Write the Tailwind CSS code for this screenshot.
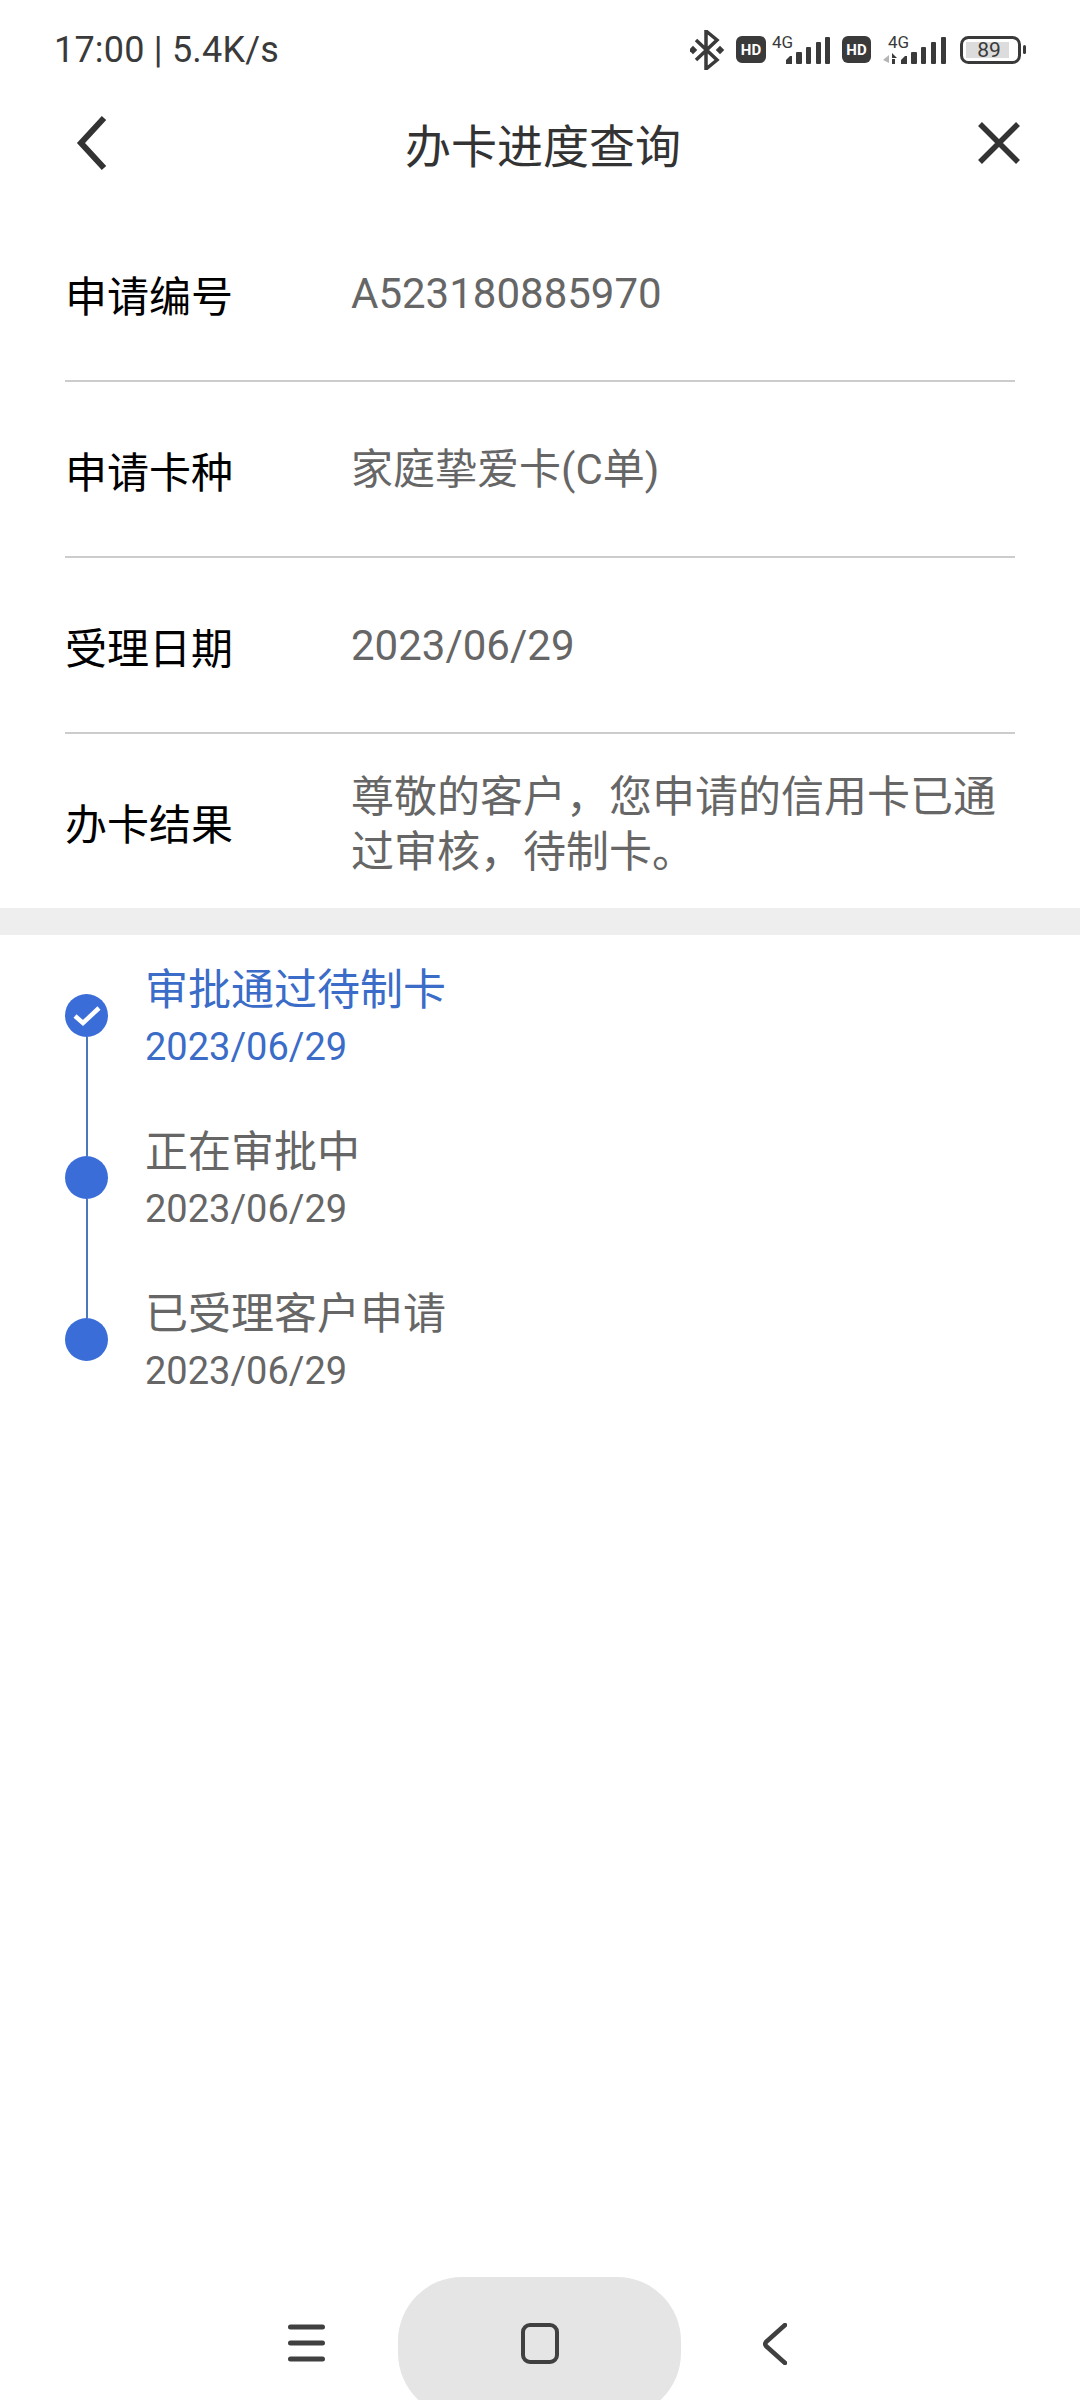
<!DOCTYPE html>
<html lang="zh">
<head>
<meta charset="utf-8">
<script src="https://cdn.jsdelivr.net/npm/@tailwindcss/browser@4"></script>
</head>
<body class="bg-white">
<div class="w-[1080px] h-[2400px] bg-white relative overflow-hidden font-['Roboto','Noto_Sans_CJK_SC',sans-serif]">
  <!-- status bar -->
  <div class="h-[100px] flex items-start justify-between pl-[54px] pr-[54px]">
    <div class="mt-[27px] text-[36px] leading-[46px] text-[#3a3a3a] tracking-[0.2px]">17:00 | 5.4K/s</div>
    <div class="mt-[30px] flex items-start">
      <svg class="w-[336px] h-[40px]" viewBox="690 30 336 40">
        <path d="M696 40 L717 60 L706 69 L706 31 L717 40 L696 60" fill="none" stroke="#3a3a3a" stroke-width="3.5"/>
        <rect x="690" y="47" width="6" height="6" transform="rotate(45 693 50)" fill="#3a3a3a"/>
        <rect x="717" y="47" width="6" height="6" transform="rotate(45 720 50)" fill="#3a3a3a"/>
        <rect x="736" y="36" width="30" height="27" rx="6" fill="#3a3a3a"/>
        <text x="751" y="55" text-anchor="middle" font-size="15" font-weight="700" fill="#fff" font-family="Roboto">HD</text>
        <text x="772" y="48" font-size="17" fill="#3a3a3a" font-family="Roboto">4G</text>
        <g fill="#3a3a3a">
          <path d="M786 60 L790 56 L792 56 L792 64 L786 64Z"/>
          <rect x="796" y="52" width="6" height="12" rx="1"/>
          <rect x="806" y="47" width="5" height="17" rx="1"/>
          <rect x="816" y="42" width="5" height="22" rx="1"/>
          <rect x="825" y="37" width="5" height="27" rx="1"/>
        </g>
        <rect x="842" y="36" width="29" height="27" rx="6" fill="#3a3a3a"/>
        <text x="856.5" y="55" text-anchor="middle" font-size="15" font-weight="700" fill="#fff" font-family="Roboto">HD</text>
        <text x="888" y="48" font-size="17" fill="#3a3a3a" font-family="Roboto">4G</text>
        <path d="M889 55 L883 60 L889 63Z" fill="#b5b5b5"/>
        <path d="M892 53 L897 58 L892 58Z M892 59 h3 v5 h-3Z" fill="#3a3a3a"/>
        <g fill="#3a3a3a">
          <path d="M901 60 L905 56 L907 56 L907 64 L901 64Z"/>
          <rect x="911" y="52" width="6" height="12" rx="1"/>
          <rect x="921" y="47" width="5" height="17" rx="1"/>
          <rect x="931" y="42" width="5" height="22" rx="1"/>
          <rect x="941" y="37" width="5" height="27" rx="1"/>
        </g>
        <rect x="961.5" y="37.5" width="58" height="25" rx="7" fill="none" stroke="#3a3a3a" stroke-width="3"/>
        <rect x="966" y="42" width="43" height="16" fill="#dcdcdc"/>
        <rect x="1023" y="45" width="3" height="9" rx="1.5" fill="#3a3a3a"/>
        <text x="989" y="57" text-anchor="middle" font-size="21" fill="#3a3a3a" font-family="Roboto">89</text>
      </svg>
    </div>
  </div>

  <!-- header -->
  <div class="h-[86px] flex items-center justify-between pl-[76px] pr-[60px]">
    <svg class="w-[32px] h-[56px]" viewBox="0 0 32 56" fill="none" stroke="#333" stroke-width="6"><path d="M28 3 L5 28 L28 53"/></svg>
    <div class="text-[46px] leading-[56px] text-[#333] font-['Noto_Sans_CJK_SC',sans-serif]">办卡进度查询</div>
    <svg class="w-[42px] h-[42px]" viewBox="0 0 42 42" fill="none" stroke="#333" stroke-width="5.5"><path d="M2 2 L40 40 M40 2 L2 40"/></svg>
  </div>

  <!-- info rows -->
  <div class="mt-[20px] px-[65px]">
    <div class="h-[176px] flex items-center border-b-2 border-[#cccccc]">
      <div class="w-[286px] text-[42px] text-black font-['Noto_Sans_CJK_SC',sans-serif]">申请编号</div>
      <div class="text-[42px] text-[#666]">A523180885970</div>
    </div>
    <div class="h-[176px] flex items-center border-b-2 border-[#cccccc]">
      <div class="w-[286px] text-[42px] text-black font-['Noto_Sans_CJK_SC',sans-serif]">申请卡种</div>
      <div class="text-[42px] text-[#666]">家庭挚爱卡(C单)</div>
    </div>
    <div class="h-[176px] flex items-center border-b-2 border-[#cccccc]">
      <div class="w-[286px] text-[42px] text-black font-['Noto_Sans_CJK_SC',sans-serif]">受理日期</div>
      <div class="text-[42px] text-[#666]">2023/06/29</div>
    </div>
    <div class="h-[174px] flex items-center">
      <div class="w-[286px] shrink-0 text-[42px] text-black font-['Noto_Sans_CJK_SC',sans-serif]">办卡结果</div>
      <div class="text-[43px] leading-[55px] text-[#666] font-['Noto_Sans_CJK_SC',sans-serif]">尊敬的客户，您申请的信用卡已通过审核，待制卡。</div>
    </div>
  </div>
  <div class="h-[27px] bg-[#eeeeee]"></div>

  <!-- timeline -->
  <div class="mt-[59px] pl-[65px]">
    <div class="flex h-[162px]">
      <div class="w-[43px] flex flex-col items-center">
        <div class="w-[43px] h-[43px] rounded-full bg-[#3a6dd8] flex items-center justify-center shrink-0">
          <svg class="w-[28px] h-[22px]" viewBox="0 0 28 22" fill="none" stroke="#fff" stroke-width="4.5"><path d="M2 11 L10 18 L26 3"/></svg>
        </div>
        <div class="w-[2px] flex-1 bg-[#4a78b8]"></div>
      </div>
      <div class="ml-[37px] -mt-[33px]">
        <div class="h-[50px] leading-[50px] text-[43px] text-[#3a6cc8] font-['Noto_Sans_CJK_SC',sans-serif]">审批通过待制卡</div>
        <div class="mt-[11px] h-[50px] leading-[50px] text-[38px] text-[#3a6cc8]">2023/06/29</div>
      </div>
    </div>
    <div class="flex h-[162px]">
      <div class="w-[43px] flex flex-col items-center">
        <div class="w-[43px] h-[43px] rounded-full bg-[#3a6dd8] shrink-0"></div>
        <div class="w-[2px] flex-1 bg-[#4a78b8]"></div>
      </div>
      <div class="ml-[37px] -mt-[33px]">
        <div class="h-[50px] leading-[50px] text-[43px] text-[#666] font-['Noto_Sans_CJK_SC',sans-serif]">正在审批中</div>
        <div class="mt-[11px] h-[50px] leading-[50px] text-[38px] text-[#666]">2023/06/29</div>
      </div>
    </div>
    <div class="flex">
      <div class="w-[43px] h-[43px] rounded-full bg-[#3a6dd8] shrink-0"></div>
      <div class="ml-[37px] -mt-[33px]">
        <div class="h-[50px] leading-[50px] text-[43px] text-[#666] font-['Noto_Sans_CJK_SC',sans-serif]">已受理客户申请</div>
        <div class="mt-[11px] h-[50px] leading-[50px] text-[38px] text-[#666]">2023/06/29</div>
      </div>
    </div>
  </div>

  <!-- navigation bar -->
  <div class="absolute left-0 right-0 bottom-0 h-[123px] flex items-start pl-[288px]">
    <svg class="w-[37px] h-[38px] mt-[47px]" viewBox="0 0 37 38" fill="none" stroke="#404040" stroke-width="5" stroke-linecap="round"><path d="M2.5 3 H34.5 M2.5 19 H34.5 M2.5 35 H34.5"/></svg>
    <div class="ml-[73px] w-[283px] h-[140px] rounded-[64px] bg-[#e5e5e5] flex justify-center pt-[46px]">
      <div class="w-[38px] h-[41px] rounded-[9px] border-[4px] border-[#404040]"></div>
    </div>
    <svg class="ml-[82px] w-[24px] h-[42px] mt-[46px]" viewBox="0 0 24 42" fill="none" stroke="#404040" stroke-width="4.5" stroke-linecap="round" stroke-linejoin="round"><path d="M22 2 L3 19 Q1.500 21 3 23 L22 40"/></svg>
  </div>
</div>
</body>
</html>
